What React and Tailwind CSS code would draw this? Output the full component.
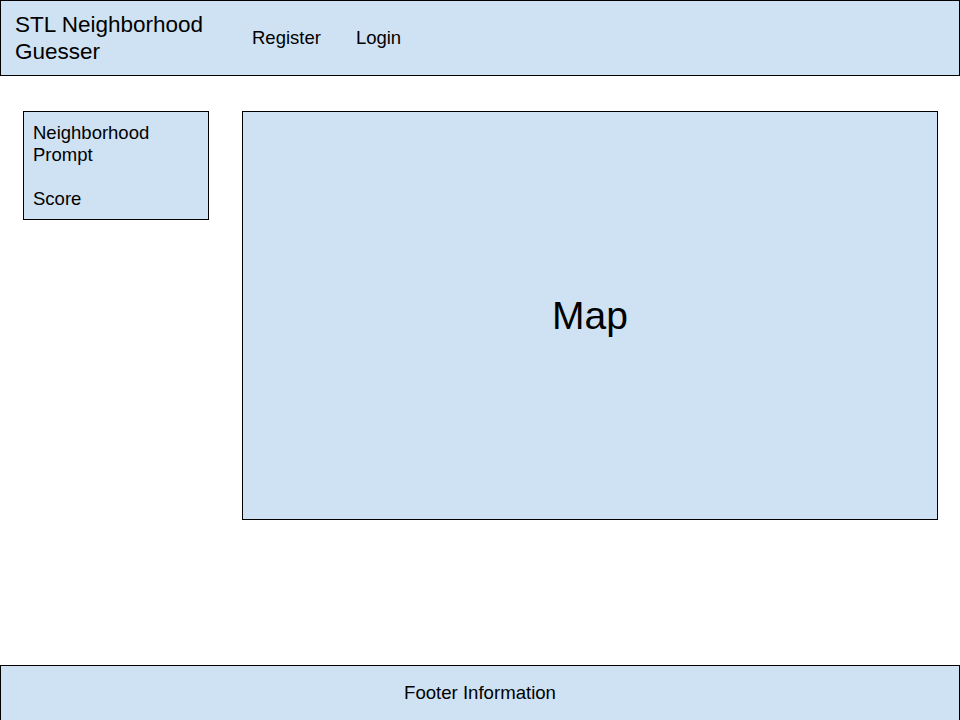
import React from 'react';

function App() {
  return (
    <div className="flex h-[720px] flex-col overflow-hidden bg-white font-['Liberation_Sans',Arial,sans-serif] text-black">
      <header className="flex h-[76px] items-center border border-black bg-[#cfe2f3] pl-[14px]">
        <div className="w-[205px] text-[22.5px] leading-[27px]">STL Neighborhood Guesser</div>
        <nav className="ml-[32px] flex gap-[35px] text-[18.5px]">
          <a href="#">Register</a>
          <a href="#">Login</a>
        </nav>
      </header>

      <main className="flex items-start gap-[33px] pl-[23px] pt-[35px]">
        <div className="w-[186px] border border-black bg-[#cfe2f3] px-[9px] pb-[9px] pt-[10px] text-[18.5px] leading-[22px]">
          <div>Neighborhood</div>
          <div>Prompt</div>
          <div className="h-[22px]"></div>
          <div>Score</div>
        </div>
        <div className="flex h-[409px] w-[696px] items-center justify-center border border-black bg-[#cfe2f3] pt-[2px]">
          <span className="text-[39px]">Map</span>
        </div>
      </main>

      <footer className="mt-auto flex h-[55px] items-center justify-center border-x border-t border-black bg-[#cfe2f3] text-[18.6px]">
        Footer Information
      </footer>
    </div>
  );
}

export default App;
